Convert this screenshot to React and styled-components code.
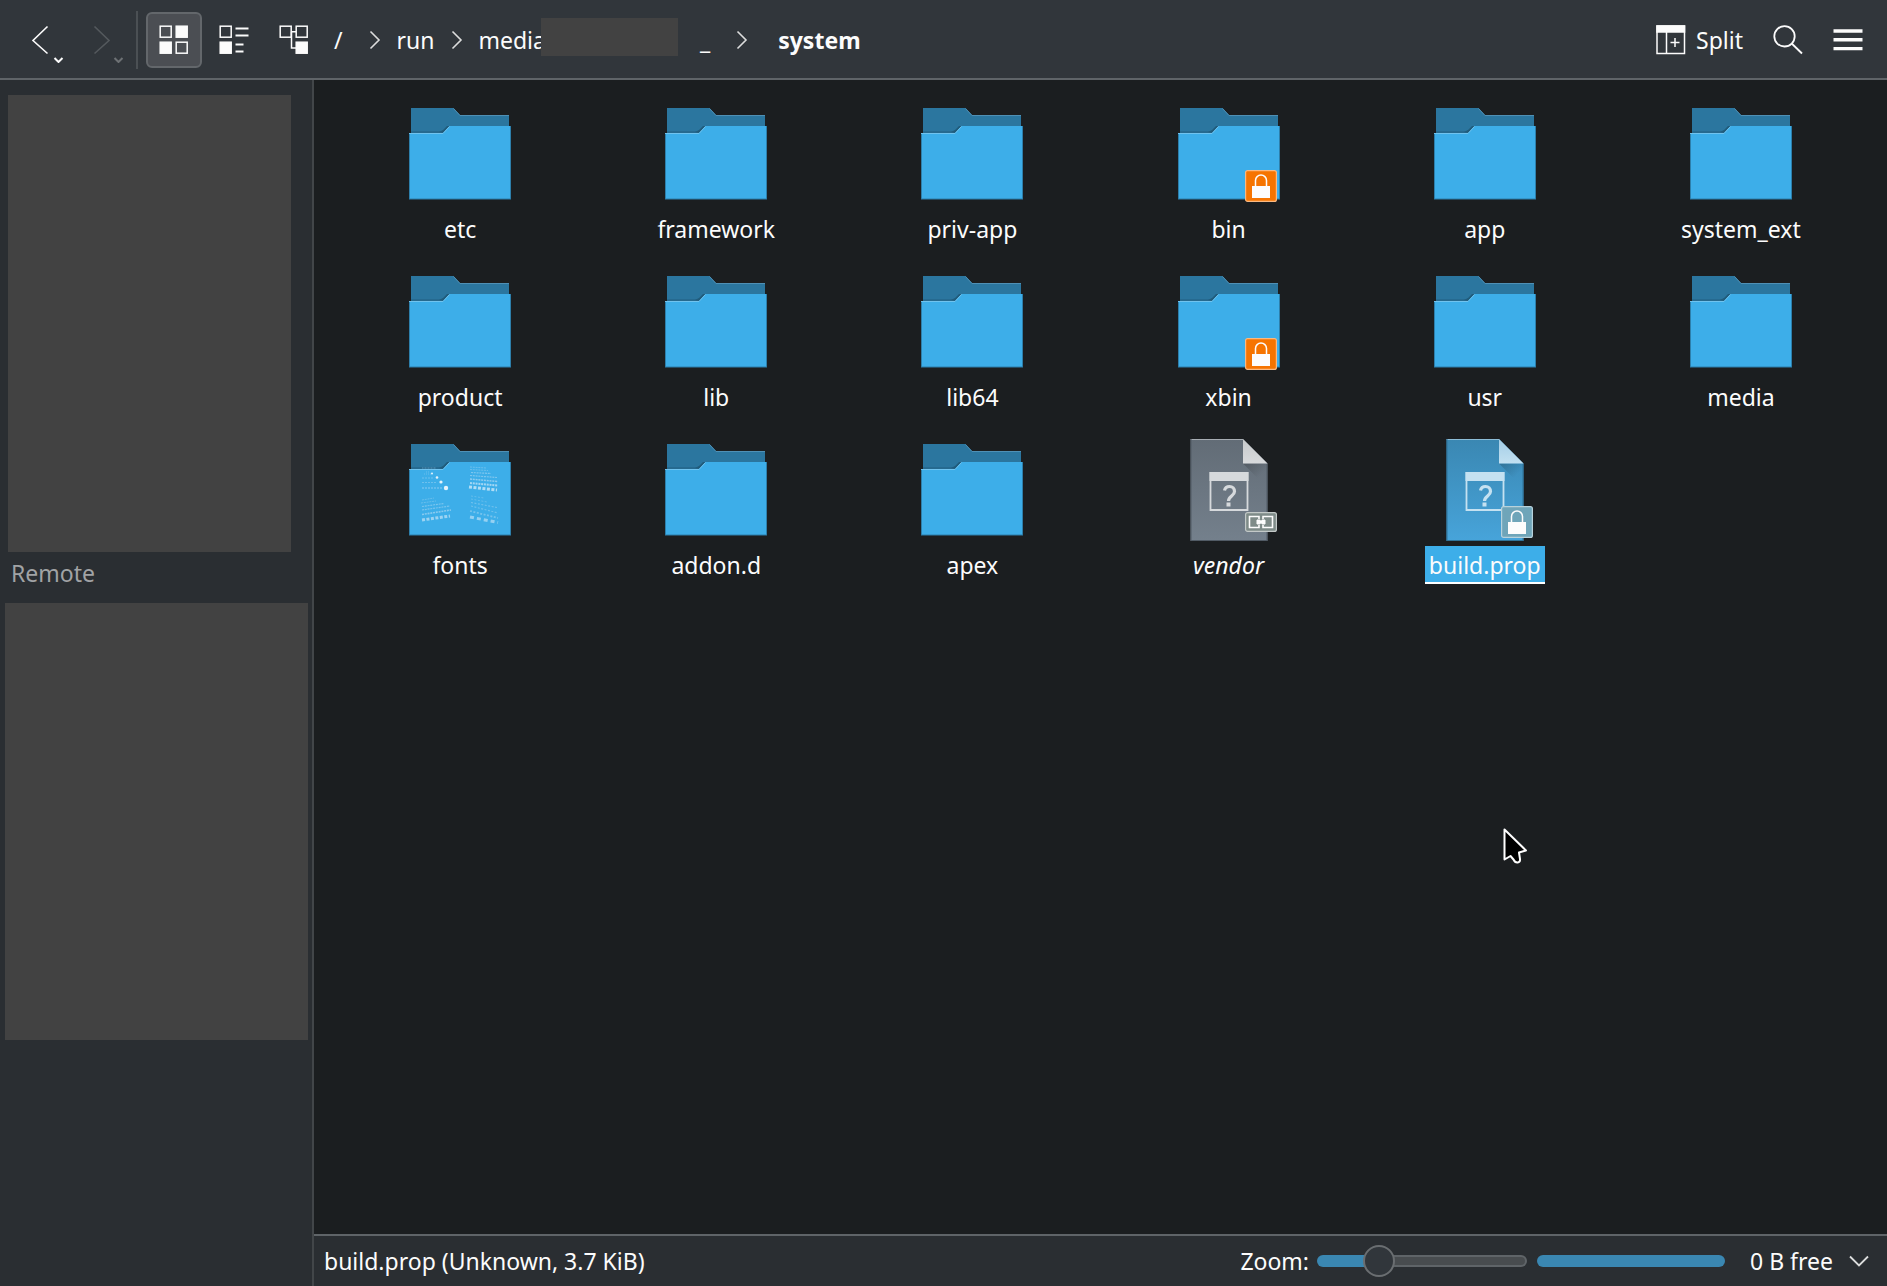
import styled, { createGlobalStyle, css } from "styled-components";

const items = [
  { name: "etc" },
  { name: "framework" },
  { name: "priv-app" },
  { name: "bin", emblem: "locked" },
  { name: "app" },
  { name: "system_ext" },
  { name: "product" },
  { name: "lib" },
  { name: "lib64" },
  { name: "xbin", emblem: "locked" },
  { name: "usr" },
  { name: "media" },
  { name: "fonts", preview: true },
  { name: "addon.d" },
  { name: "apex" },
  { name: "vendor", type: "file", emblem: "link" },
  { name: "build.prop", type: "file", emblem: "lock", selected: true },
];

function BackIcon() {
  return (
    <svg width="34" height="44" viewBox="0 0 34 44" fill="none" stroke="currentColor" strokeWidth="1.6">
      <path d="M17.5 7.5 3 21.5 17.5 34.5" />
      <path d="M24.5 39l4 4 4-4" strokeWidth="2" />
    </svg>
  );
}

function ForwardIcon() {
  return (
    <svg width="34" height="44" viewBox="0 0 34 44" fill="none" stroke="currentColor" strokeWidth="1.6">
      <path d="M4.5 7.5 19 21.5 4.5 34.5" />
      <path d="M24.5 39l4 4 4-4" strokeWidth="2" stroke="#6d7174" />
    </svg>
  );
}

function IconsViewIcon() {
  return (
    <svg width="30" height="30" viewBox="0 0 30 30" fill="none" stroke="currentColor" strokeWidth="1.5">
      <rect x="1.2" y="1.2" width="11" height="11" />
      <rect x="17.2" y="1.2" width="11" height="11" fill="currentColor" />
      <rect x="1.2" y="17.2" width="11" height="11" fill="currentColor" />
      <rect x="17.2" y="17.2" width="11" height="11" />
    </svg>
  );
}

function CompactViewIcon() {
  return (
    <svg width="30" height="30" viewBox="0 0 30 30" fill="none" stroke="currentColor" strokeWidth="1.5">
      <rect x="1.2" y="1.2" width="11" height="11" />
      <rect x="1.2" y="17.2" width="11" height="11" fill="currentColor" />
      <path d="M16.5 3.5h13M16.5 10.5h13M16.5 19.5h8M16.5 26.5h8" strokeWidth="2" />
    </svg>
  );
}

function TreeViewIcon() {
  return (
    <svg width="30" height="30" viewBox="0 0 30 30" fill="none" stroke="currentColor" strokeWidth="1.5">
      <rect x="1.2" y="1.2" width="11" height="11" />
      <rect x="17.2" y="1.2" width="11" height="11" />
      <rect x="17.2" y="17.2" width="11" height="11" fill="currentColor" />
      <path d="M12 6.7h5M12.5 6.7V23h5" />
    </svg>
  );
}

function SplitIcon() {
  return (
    <svg width="30" height="30" viewBox="0 0 30 30" fill="none" stroke="currentColor" strokeWidth="1.5">
      <rect x="1" y="1" width="27.5" height="27.5" />
      <rect x="1" y="1" width="27.5" height="6" fill="currentColor" />
      <path d="M10.5 7v21M14.5 17.5h9M19 13v9" />
    </svg>
  );
}

function SearchIcon() {
  return (
    <svg width="30" height="30" viewBox="0 0 30 30" fill="none" stroke="currentColor" strokeWidth="1.8">
      <circle cx="11.5" cy="11.3" r="10.2" />
      <path d="M18.7 18.5 29 28.5" />
    </svg>
  );
}

function MenuIcon() {
  return (
    <svg width="30" height="30" viewBox="0 0 30 30" fill="none" stroke="currentColor" strokeWidth="3.4">
      <path d="M.5 6h29M.5 14.8h29M.5 23.6h29" />
    </svg>
  );
}

function Chevron() {
  return (
    <svg width="12" height="20" viewBox="0 0 12 20" fill="none" stroke="#dcdddd" strokeWidth="1.6">
      <path d="M1.5 1.5 10 10 1.5 18.5" />
    </svg>
  );
}

function DownIcon() {
  return (
    <svg width="20" height="12" viewBox="0 0 20 12" fill="none" stroke="#dcdddd" strokeWidth="1.8">
      <path d="M1 1.5 10 10.5 19 1.5" />
    </svg>
  );
}

function FontPreview() {
  return (
    <g fill="none" stroke="#a9d7f3" strokeWidth="1.4">
      <g opacity=".5">
        <path d="M18 34h14" strokeDasharray="1 .5" strokeWidth=".8" />
        <path d="M22 38h4M20 40h8" strokeDasharray="1 1" strokeWidth=".8" />
        <path d="M18 44h12M18 48.5h15" strokeDasharray="2 1" strokeWidth=".9" />
        <path d="M18 54h20" strokeDasharray="2 1" strokeWidth="2" opacity=".7" />
      </g>
      <g fill="#e6f3fb" stroke="none">
        <circle cx="28" cy="39.5" r="1" />
        <circle cx="33" cy="43.5" r="1.3" />
        <circle cx="37" cy="48" r="1.6" />
        <circle cx="42" cy="54" r="2.2" />
      </g>
      <g strokeDasharray="2 .8" opacity=".75">
        <path d="M66 33l16 1M66 35.5l18 1" strokeWidth=".8" opacity=".7" />
        <path d="M67 38.5l20 1M66 41.5l27 2" strokeWidth="1.2" opacity=".8" />
        <path d="M66 45l28 2.5" strokeWidth="1.5" />
        <path d="M66 49l28 2.5" strokeWidth="2" stroke="#c5e4f7" />
        <path d="M65 53l28 3" strokeWidth="3" stroke="#d8edf9" strokeDasharray="3 1.5" />
      </g>
      <g strokeDasharray="2 .8" opacity=".7">
        <path d="M18 66l12-2M17 69l15-2" strokeWidth=".8" opacity=".7" />
        <path d="M18 72.5l22-3M18 76l28-4" strokeWidth="1.2" opacity=".8" />
        <path d="M18 80.5l29-4.5" strokeWidth="1.6" />
        <path d="M18 86l28-4" strokeWidth="3" stroke="#c5e4f7" strokeDasharray="3 1.5" />
      </g>
      <g strokeDasharray="2 1.5" opacity=".65">
        <path d="M67 62l13 2M67 65l16 3" strokeWidth=".8" opacity=".7" />
        <path d="M67 68.5l26 5M67 72l27 7" strokeWidth="1.2" opacity=".7" />
        <path d="M66 77l28 7" strokeWidth="1.8" opacity=".8" />
        <path d="M66 83l28 5.5" strokeWidth="3" stroke="#c5e4f7" strokeDasharray="4 3" />
      </g>
    </g>
  );
}

function Folder({ preview }) {
  return (
    <svg width="112" height="112" viewBox="0 0 112 112">
      <path d="M7 10h42.5l7 7.5H105V60H7z" fill="#2b769f" />
      <path d="M49.5 10.5l6.5 7h49" fill="none" stroke="#4f90b5" />
      <path d="M35 34q5-2 8-6h3l-6 7z" fill="#215b7a" />
      <path d="M7 34h31" stroke="#235f80" />
      <path d="M5 35h34l6.5-7H107v73H5z" fill="#3daee9" />
      <path d="M5 35.5h34l6.5-7" fill="none" stroke="#6fc3ef" />
      <path d="M5.5 36v65M106.5 28v73M5 101h102" fill="none" stroke="#2d7fab" />
      {preview && <FontPreview />}
    </svg>
  );
}

function FileIcon({ selected, id }) {
  const fill = selected ? ["#3a87b2", "#47a4da"] : ["#626c76", "#74808c"];
  const edge = selected ? "#2f7399" : "#515b65";
  const light = selected ? "#c5e1f1" : "#d6d9dc";
  const fold = selected ? ["#a3cde6", "#c2e0f1"] : ["#c6c9cb", "#d8dadc"];
  return (
    <svg width="112" height="112" viewBox="0 0 112 112">
      <defs>
        <linearGradient id={id + "-page"} x2="0" y2="1">
          <stop stopColor={fill[0]} />
          <stop offset="1" stopColor={fill[1]} />
        </linearGradient>
        <linearGradient id={id + "-fold"} x2="0" y2="1">
          <stop stopColor={fold[0]} />
          <stop offset="1" stopColor={fold[1]} />
        </linearGradient>
        <linearGradient id={id + "-shade"} x2="1" y2="1">
          <stop stopColor="#000" stopOpacity=".2" />
          <stop offset=".6" stopColor="#000" stopOpacity="0" />
        </linearGradient>
      </defs>
      <path d="M17.5 5H70l24.5 24.5V107h-77z" fill={`url(#${id}-page)`} />
      <path d="M70 29.5h24.5V54z" fill={`url(#${id}-shade)`} />
      <path d="M17.5 5.5H70" stroke={light} opacity=".6" />
      <path d="M18 5v101.5h76V30" fill="none" stroke={edge} />
      <path d="M70 5v24.5h24.5z" fill={`url(#${id}-fold)`} />
      <path d="M37.5 39h37v37h-37z" fill="none" stroke={light} strokeWidth="1.8" />
      <path d="M36.5 38h39v9h-39z" fill={light} />
      <path
        d="M51.5 56.5c.5-2.5 2.500-4 5-4 3 0 5 2 5 5 0 4.500-6 4.500-6 9.500"
        fill="none"
        stroke={light}
        strokeWidth="3.2"
      />
      <path d="M53.5 68.5h4v4h-4z" fill={light} />
    </svg>
  );
}

function LockEmblem({ orange }) {
  return (
    <svg width="32" height="32" viewBox="0 0 32 32">
      <rect
        x=".6" y=".6" width="30.8" height="30.8" rx="2"
        fill={orange ? "#f67400" : "#6fa5b9"}
        stroke={orange ? "#fbb981" : "#b7d2dc"}
        strokeWidth="1.2"
      />
      <path d="M10.5 17v-6.5a5.500 5.500 0 0 1 11 0V17" fill="none" stroke="#fcfcfc" strokeWidth="1.5" />
      <path d="M7 16h18v12H7z" fill="#fcfcfc" />
    </svg>
  );
}

function LinkEmblem() {
  return (
    <svg width="32" height="20" viewBox="0 0 32 20">
      <rect x=".6" y=".6" width="30.8" height="18.8" rx="2" fill="#7e8b88" stroke="#c3c9c8" strokeWidth="1.2" />
      <path
        d="M14 7V4.5H4.500v11H14V13M18 7V4.500h9.500v11H18V13"
        fill="none" stroke="#fcfcfc" strokeWidth="1.6"
      />
      <path d="M12 8h3v1h2V8h3v4h-3v-1h-2v1h-3z" fill="#fcfcfc" stroke="#fcfcfc" />
    </svg>
  );
}

function Pointer() {
  return (
    <svg width="26" height="38" viewBox="0 0 26 38">
      <path
        d="M1.5 1.5v30l6-3.500 3 3.500c2 4.500 7 3.500 6.500-.5l-1-6.500 7-2z"
        fill="#000" stroke="#fff" strokeWidth="2" strokeLinejoin="round"
      />
    </svg>
  );
}

function Item({ item }) {
  return (
    <ItemButton type="button">
      <Thumb>
        {item.type === "file" ? (
          <FileIcon selected={item.selected} id={item.emblem} />
        ) : (
          <Folder preview={item.preview} />
        )}
        {item.emblem && (
          <Emblem>
            {item.emblem === "link" ? <LinkEmblem /> : <LockEmblem orange={item.emblem === "locked"} />}
          </Emblem>
        )}
      </Thumb>
      <ItemName $selected={item.selected} $italic={item.emblem === "link"}>
        {item.name}
      </ItemName>
    </ItemButton>
  );
}

export default function App() {
  return (
    <>
      <GlobalStyle />
      <Window>
        <Toolbar>
          <NavButton type="button" aria-label="Back"><BackIcon /></NavButton>
          <NavButton type="button" aria-label="Forward" disabled><ForwardIcon /></NavButton>
          <Separator />
          <ViewModes>
            <ToolButton type="button" aria-label="Icons" $active><IconsViewIcon /></ToolButton>
            <ToolButton type="button" aria-label="Compact"><CompactViewIcon /></ToolButton>
            <ToolButton type="button" aria-label="Details"><TreeViewIcon /></ToolButton>
          </ViewModes>
          <Breadcrumbs>
            <Crumb href="#root" $narrow>/</Crumb>
            <Chevron />
            <Crumb href="#run">run</Crumb>
            <Chevron />
            <Crumb href="#media">media</Crumb>
            <HiddenCrumb />
            <Crumb href="#disk" $narrow>_</Crumb>
            <Chevron />
            <Crumb href="#system" $current>system</Crumb>
          </Breadcrumbs>
          <Actions>
            <SplitButton type="button"><SplitIcon />Split</SplitButton>
            <PlainButton type="button" aria-label="Search"><SearchIcon /></PlainButton>
            <PlainButton type="button" aria-label="Menu"><MenuIcon /></PlainButton>
          </Actions>
        </Toolbar>
        <Body>
          <Sidebar>
            <Places />
            <SectionTitle>Remote</SectionTitle>
            <RemotePlaces />
          </Sidebar>
          <Main>
            <Grid>
              {items.map((item) => (
                <li key={item.name}><Item item={item} /></li>
              ))}
            </Grid>
            <StatusBar>
              <StatusText>build.prop (Unknown, 3.7 KiB)</StatusText>
              <label htmlFor="zoom">Zoom:</label>
              <ZoomSlider type="range" id="zoom" min="0" max="100" defaultValue="25" />
              <Capacity value="100" max="100" aria-label="Used space" />
              <SpaceButton type="button">0 B free<DownIcon /></SpaceButton>
            </StatusBar>
          </Main>
        </Body>
        <Cursor><Pointer /></Cursor>
      </Window>
    </>
  );
}

const GlobalStyle = createGlobalStyle`
  * {
    box-sizing: border-box;
  }

  body {
    margin: 0;
    background: #2a2e32;
    color: #fcfcfc;
    font: 23px/32px "Noto Sans", sans-serif;
  }

  button {
    padding: 0;
    border: 0;
    background: none;
    color: inherit;
    font: inherit;
  }

  svg {
    display: block;
    flex: none;
  }
`;

const Window = styled.div`
  position: relative;
  display: flex;
  flex-direction: column;
  min-height: 100vh;
`;

const Toolbar = styled.header`
  display: flex;
  align-items: center;
  height: 80px;
  padding: 2px 24px 0 30px;
  background: #31363b;
  border-bottom: 2px solid #5f6468;
`;

const NavButton = styled.button`
  width: 60px;
  height: 46px;
  padding-top: 2px;

  &:disabled {
    color: #54595d;
  }
`;

const Separator = styled.div`
  width: 2px;
  height: 58px;
  margin: 0 8px 0 -14px;
  background: #4b5054;
`;

const ViewModes = styled.div`
  display: flex;
  gap: 4px;
`;

const ToolButton = styled.button`
  display: grid;
  place-items: center;
  width: 56px;
  height: 56px;
  border: 1px solid transparent;
  border-radius: 6px;

  ${({ $active }) => $active && css`
    background: #4b4e53;
    border: 2px solid #63676b;
  `}
`;

const Breadcrumbs = styled.nav`
  display: flex;
  align-items: center;
  gap: 16px;
  padding-left: 12px;
`;

const Crumb = styled.a`
  color: inherit;
  text-decoration: none;
  font-weight: ${({ $current }) => ($current ? 700 : 400)};
  margin-left: ${({ $current }) => ($current ? "14px" : "0")};
  margin-right: ${({ $narrow }) => ($narrow ? "10px" : "0")};
`;

const HiddenCrumb = styled.span`
  width: 137px;
  height: 38px;
  margin: 0 6px 6px -21px;
  background: #424242;
`;

const Actions = styled.div`
  display: flex;
  align-items: center;
  gap: 30px;
  margin-left: auto;
`;

const PlainButton = styled.button`
  display: flex;
  align-items: center;
`;

const SplitButton = styled(PlainButton)`
  gap: 10px;
`;

const Body = styled.div`
  display: flex;
  flex: 1;
`;

const Sidebar = styled.aside`
  width: 314px;
  flex: none;
  padding: 15px 4px 0 5px;
  border-right: 2px solid #424649;
`;

const Places = styled.div`
  height: 457px;
  margin: 0 17px 0 3px;
  background: #424242;
`;

const SectionTitle = styled.h2`
  margin: 5px 0 14px 6px;
  color: #a1a3a5;
  font-size: 23px;
  font-weight: 400;
  line-height: 32px;
`;

const RemotePlaces = styled.div`
  height: 437px;
  background: #424242;
`;

const Main = styled.main`
  display: flex;
  flex: 1;
  flex-direction: column;
  min-width: 0;
  background: #1b1e20;
`;

const Grid = styled.ul`
  display: grid;
  grid-template-columns: repeat(6, 1fr);
  align-content: start;
  row-gap: 18px;
  flex: 1;
  margin: 0;
  padding: 18px;
  list-style: none;
`;

const ItemButton = styled.button`
  display: flex;
  flex-direction: column;
  align-items: center;
  width: 100%;
`;

const Thumb = styled.span`
  position: relative;
`;

const Emblem = styled.span`
  position: absolute;
  right: 8px;
  bottom: 8px;
  display: grid;
  align-items: center;
  height: 32px;
`;

const ItemName = styled.span`
  padding: 0 4px;
  line-height: 38px;
  font-style: ${({ $italic }) => ($italic ? "italic" : "normal")};

  ${({ $selected }) => $selected && css`
    background: #3daee9;
    box-shadow: inset 0 -2px #fff;
  `}
`;

const StatusBar = styled.footer`
  display: flex;
  align-items: center;
  height: 52px;
  padding: 0 18px 0 10px;
  background: #2a2e32;
  border-top: 2px solid #5f6468;
`;

const StatusText = styled.span`
  margin-right: auto;
`;

const ZoomSlider = styled.input`
  appearance: none;
  width: 210px;
  height: 12px;
  margin: 0 10px 0 8px;
  border: 2px solid transparent;
  border-radius: 6px;
  background:
    linear-gradient(#3a87b2, #3a87b2) 0 0 / 60px 100% no-repeat border-box,
    linear-gradient(#484c4f, #484c4f) padding-box,
    linear-gradient(#5f6468, #5f6468) border-box;

  &::-webkit-slider-thumb {
    appearance: none;
    width: 32px;
    height: 32px;
    border: 2px solid #6a6e71;
    border-radius: 50%;
    background: #31363b;
  }
`;

const Capacity = styled.progress`
  appearance: none;
  width: 188px;
  height: 12px;
  margin-right: 25px;
  border-radius: 6px;
  overflow: hidden;

  &::-webkit-progress-bar {
    background: #484c4f;
  }

  &::-webkit-progress-value {
    background: #3a87b2;
  }
`;

const SpaceButton = styled(PlainButton)`
  gap: 16px;
`;

const Cursor = styled.div`
  position: absolute;
  left: 1503px;
  top: 828px;
  pointer-events: none;
`;
